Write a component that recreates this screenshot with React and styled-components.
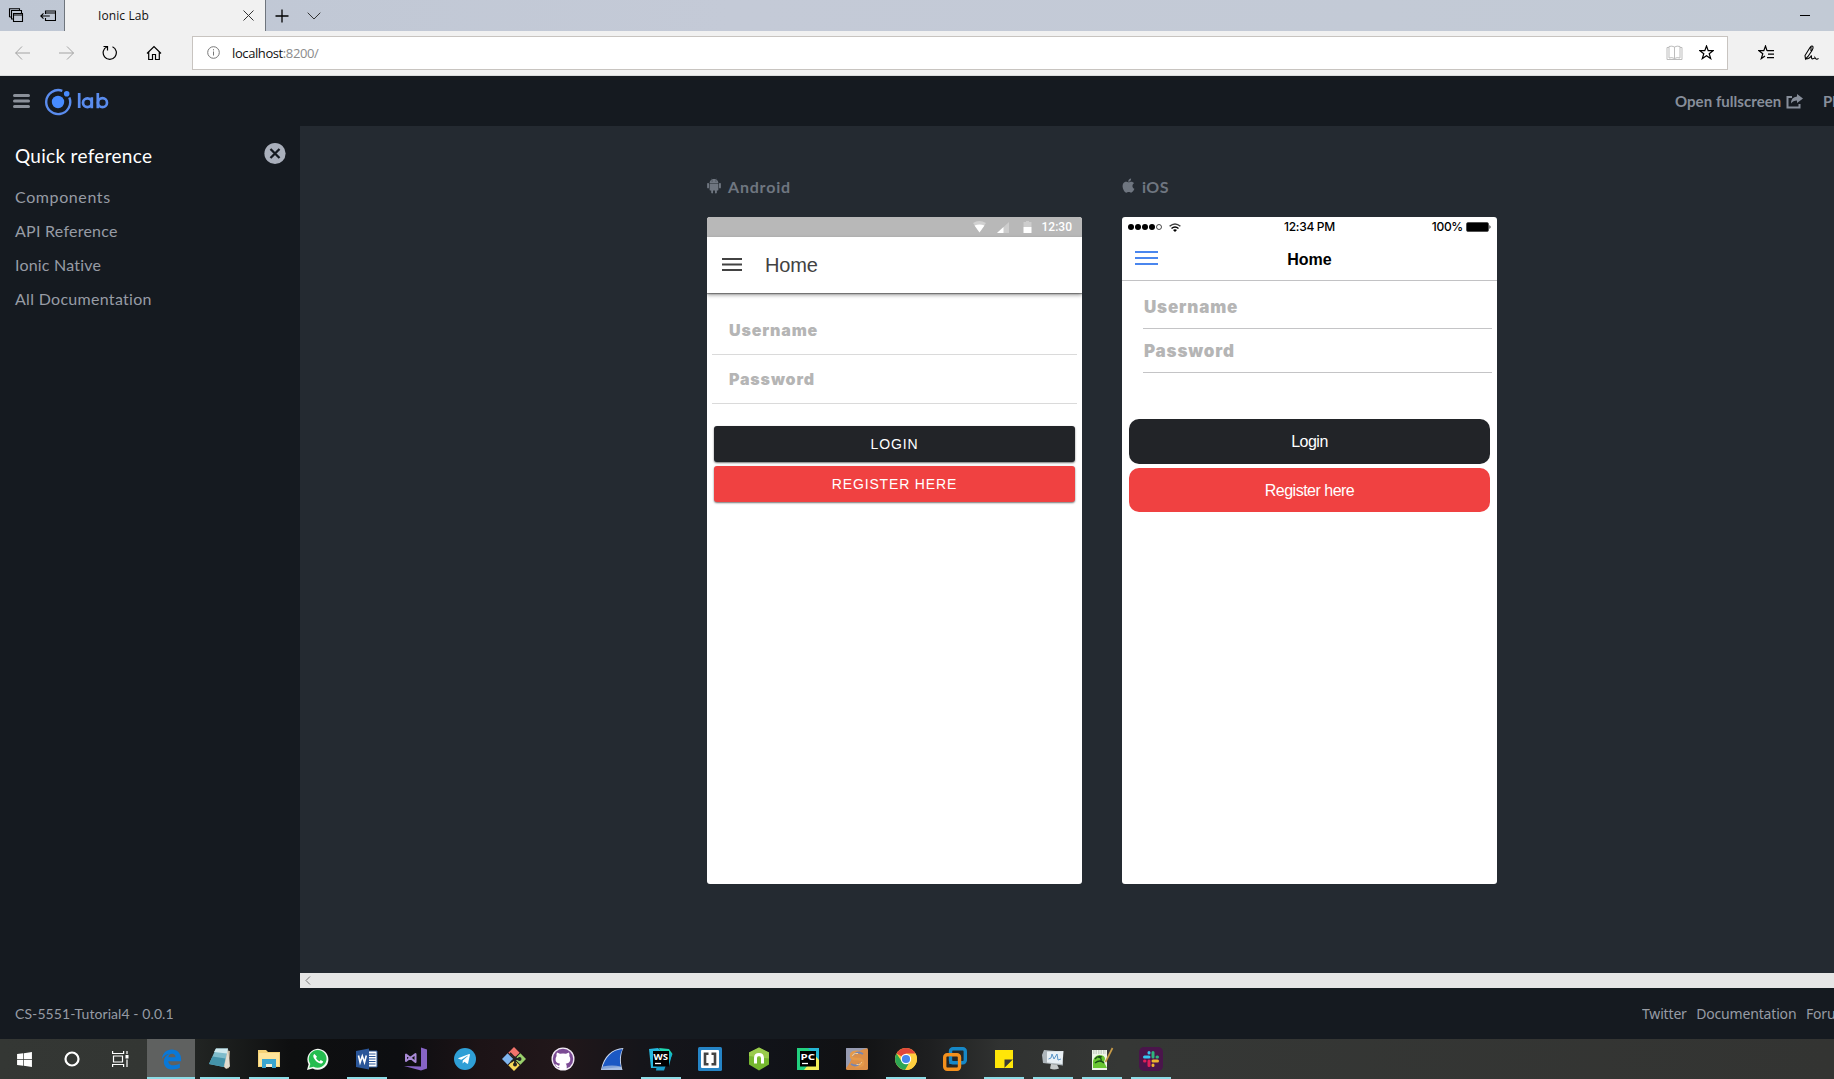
import React from 'react';
import styled, { createGlobalStyle } from 'styled-components';
import { FaWindows, FaTelegramPlane } from 'react-icons/fa';
import { IoLogoAndroid, IoLogoApple } from 'react-icons/io';

const Global = createGlobalStyle`
  * { box-sizing: border-box; }
  html, body { margin: 0; padding: 0; overflow: hidden; background: #151a20; }
  svg { display: block; flex: none; }
`;

const ui = `"Open Sans", "Noto Sans", sans-serif`;
const avenir = `Lato, "Open Sans", sans-serif`;
const arial = `"Liberation Sans", Arial, sans-serif`;

const Screen = styled.div`
  width: 1834px;
  height: 1079px;
  display: flex;
  flex-direction: column;
  overflow: hidden;
  white-space: nowrap;
`;

/* ---------- browser ---------- */
const TabStrip = styled.div`
  flex: 0 0 31px;
  display: flex;
  background: linear-gradient(90deg, #bfc7d4, #c4cad7 40%, #c3cad6 75%, #c2cad5);
`;
const TabTools = styled.div`
  width: 65px;
  display: flex;
  align-items: center;
  padding-left: 8px;
  gap: 16px;
  border-right: 1px solid #6f757d;
`;
const Tab = styled.div`
  width: 201px;
  display: flex;
  align-items: center;
  justify-content: space-between;
  padding: 0 11px 0 33px;
  background: #f1f1f1;
  border-right: 1px solid #6f757d;
  font: 12px/31px ${ui};
  letter-spacing: 0.1px;
  color: #111;
`;
const TabActions = styled.div`
  flex: 1;
  display: flex;
  align-items: center;
  gap: 18px;
  padding: 0 24px 0 9px;
`;
const Minimize = styled.i`
  margin-left: auto;
  width: 10px;
  height: 1px;
  background: #000;
`;
const NavBar = styled.div`
  flex: 0 0 45px;
  display: flex;
  align-items: center;
  padding: 0 14px 1px 15px;
  background: #f1f1f1;
  border-bottom: 1px solid #d9dcdc;
`;
const NavButtons = styled.div`
  width: 177px;
  display: flex;
  gap: 27.6px;
`;
const Address = styled.div`
  flex: 1;
  height: 34px;
  display: flex;
  align-items: center;
  padding: 0 13px 0 14px;
  background: #fff;
  border: 1px solid #c8c4c0;
  font: 13px/32px ${ui};
  letter-spacing: -0.4px;
  color: #111;
`;
const Url = styled.div`
  flex: 1;
  margin-left: 12px;
  span { color: #8b8b8b; }
`;
const AddressIcons = styled.div`
  display: flex;
  gap: 16px;
`;
const NavRight = styled.div`
  display: flex;
  gap: 28px;
  margin: 0 1px 0 30px;
`;

/* ---------- lab shell ---------- */
const Header = styled.header`
  flex: 0 0 50px;
  display: flex;
  align-items: center;
  padding-left: 13px;
  background: #151a20;
`;
const Logo = styled.div`
  display: flex;
  align-items: center;
  margin: 1px 0 0 14px;
  gap: 5px;
`;
const HeaderLinks = styled.nav`
  width: 159px;
  margin-left: auto;
  display: flex;
  overflow: hidden;
  align-items: center;
  font: 700 15px/50px ${avenir};
  color: #878e9a;
`;
const OpenLink = styled.span`
  display: flex;
  align-items: center;
  width: 148px;
  flex: none;
  gap: 5px;
  letter-spacing: 0.05px;
`;
const Body = styled.div`
  flex: 0 0 863px;
  display: flex;
`;
const Sidebar = styled.aside`
  width: 300px;
  padding: 16px 14px 0 15px;
  background: #151a20;
`;
const SideHead = styled.div`
  display: flex;
  justify-content: space-between;
  align-items: flex-start;
  height: 38px;
`;
const SideTitle = styled.h2`
  margin: 0;
  font: 400 19px/27px ${avenir};
  letter-spacing: 0.3px;
  color: #fff;
`;
const SideLink = styled.a`
  display: block;
  font: 400 16px/34px ${avenir};
  letter-spacing: ${p => p.$ls};
  color: #979ca5;
`;
const Main = styled.main`
  flex: 1;
  display: flex;
  flex-direction: column;
  background: #242a31;
`;
const Stage = styled.div`
  flex: 1;
  display: flex;
  gap: 40px;
  padding: 48px 0 0 407px;
`;
const ScrollTrack = styled.div`
  height: 16px;
  display: flex;
  align-items: center;
  padding-left: 5px;
  background: #e6e6e6;
  border-bottom: 1px solid #151a20;
`;
const DeviceLabel = styled.div`
  display: flex;
  align-items: center;
  height: 26px;
  gap: 4px;
  margin-bottom: 17px;
  font: 700 16px/26px ${avenir};
  letter-spacing: ${p => p.$ls};
  color: #6f7680;
  svg { margin-top: -3px; margin-left: ${p => p.$pull}; }
`;
const Phone = styled.div`
  width: 375px;
  height: 667px;
  overflow: hidden;
  border-radius: 3px;
  background: #fff;
`;

/* ---------- android ---------- */
const MdStatus = styled.div`
  height: 20px;
  display: flex;
  align-items: center;
  justify-content: flex-end;
  padding-right: 10px;
  background: #b8b8b8;
  font: 500 12px/21px Roboto, sans-serif;
  color: #fff;
`;
const MdToolbar = styled.div`
  height: 56px;
  display: flex;
  align-items: center;
  padding-left: 15px;
  gap: 23px;
  box-shadow: 0 2px 4px rgba(0, 0, 0, 0.4), 0 1px 1px rgba(0, 0, 0, 0.35);
  font: 20px/56px ${arial};
  letter-spacing: -0.2px;
  color: #424242;
`;
const MdForm = styled.div`
  padding: 13px 5px 0;
`;
const MdField = styled.div`
  height: 49px;
  padding-left: 17px;
  border-bottom: 1px solid #dadada;
  font: 900 16px/49px Inter, sans-serif;
  letter-spacing: 0.85px;
  color: #b5b5b5;
`;
const MdButtons = styled.div`
  padding: 22px 2px 0;
`;
const MdButton = styled.div`
  height: 36px;
  margin-bottom: 4px;
  border-radius: 3px;
  background: ${p => p.$bg};
  box-shadow: 0 1px 2px rgba(0, 0, 0, 0.55);
  text-align: center;
  font: 14px/37px ${arial};
  letter-spacing: 0.84px;
  color: #fff;
`;

/* ---------- ios ---------- */
const IosStatus = styled.div`
  height: 20px;
  display: grid;
  grid-template-columns: 1fr auto 1fr;
  align-items: center;
  padding: 0 6px;
  font: 500 12px/20px Inter, sans-serif;
  letter-spacing: -0.3px;
  color: #000;
`;
const StatusLeft = styled.span`
  display: flex;
  gap: 7px;
`;
const StatusRight = styled.span`
  display: flex;
  align-items: center;
  justify-content: flex-end;
  gap: 3px;
`;
const IosToolbar = styled.div`
  height: 44px;
  display: grid;
  grid-template-columns: 1fr auto 1fr;
  align-items: center;
  padding: 0 13px;
  border-bottom: 1px solid #c2c2c4;
  font: 700 16px/45px ${arial};
  color: #000;
  svg { margin-top: -3px; }
`;
const IosForm = styled.div`
  padding: 4px 5px 0 21px;
`;
const IosField = styled.div`
  height: 44px;
  padding-left: 1px;
  border-bottom: 1px solid #c4c4c6;
  font: 900 17px/45px Inter, sans-serif;
  letter-spacing: 0.85px;
  color: #b5b5b5;
`;
const IosButtons = styled.div`
  padding: 46px 7px 0;
`;
const IosButton = styled.div`
  height: ${p => p.$h}px;
  margin-bottom: 4px;
  border-radius: 10px;
  background: ${p => p.$bg};
  text-align: center;
  font: 16px/45px ${arial};
  letter-spacing: -0.5px;
  color: #fff;
`;

/* ---------- footer and taskbar ---------- */
const Footer = styled.footer`
  flex: 0 0 50px;
  display: flex;
  padding-left: 15px;
  background: #151a20;
  font: 400 14px/50px ${avenir};
  letter-spacing: 0.08px;
  color: #979ca5;
`;
const FooterLinks = styled.nav`
  display: flex;
  gap: 9.5px;
  width: 192px;
  margin-left: auto;
  overflow: hidden;
  font: 400 14px/50px "Noto Sans", sans-serif;
  letter-spacing: -0.17px;
`;
const Taskbar = styled.div`
  flex: 0 0 40px;
  display: flex;
  background: linear-gradient(90deg, #343734 0, #333633 145px, #222523 195px, #0e0f10 290px, #0d0e11 400px, #1c1316 480px, #21171a 560px, #15151a 640px, #111319 760px, #101113 850px, #1e1f20 930px, #303231 1000px, #353735 1120px, #333432 1834px);
`;
const SystemSlots = styled.div`
  width: 147px;
  display: flex;
`;
const Slot = styled.div`
  width: ${p => p.$w}px;
  display: flex;
  flex-direction: column;
  align-items: center;
  background: ${p => (p.$active ? '#5f6160' : 'transparent')};
`;
const SlotIcon = styled.div`
  height: 38px;
  display: flex;
  align-items: center;
  padding-top: 2px;
`;
const Running = styled.i`
  width: ${p => p.$w}px;
  height: 2px;
  background: #8ddce6;
`;
const Apps = styled.div`
  display: flex;
  margin-left: 0.5px;
`;

const Line = ({ w = 16, h = 16, vb, c = '#000', sw = 1, children, ...r }) => (
  <svg width={w} height={h} viewBox={vb || `0 0 ${w} ${h}`} fill="none" stroke={c} strokeWidth={sw} {...r}>{children}</svg>
);
const App24 = ({ children, s = 24 }) => (
  <svg width={s} height={s} viewBox="0 0 24 24" fill="none">{children}</svg>
);
const badge = { fontFamily: '"Open Sans", sans-serif', fontWeight: 700, fill: '#fff' };

const Edge = () => (
  <App24 s={23}><path fill="#0a78d7" d="M2 11.5C2.6 5.5 6.7 1.6 12.3 1.6c6 0 9.7 4.3 9.7 10v2.1H8.6c.2 3 2.800 4.300 5.800 4.300 2.400 0 4.500-.7 6.300-1.800v4.500c-2.200 1.200-4.600 1.800-7.300 1.800-5.900 0-9.400-3.200-9.400-8.200 0-3.700 2-6.700 5.600-8.400-3.400.4-5.900 2.500-7.600 5.600zM8.700 9.700h7.500c0-2.400-1.400-3.800-3.600-3.800-2.300 0-3.600 1.700-3.900 3.800z" /></App24>
);
const Notepad = () => (
  <App24>
    <path d="M8 2l14 2-1 17-3 1z" fill="#b9a98f" />
    <path d="M8 1.500h12L16 20 1 17z" fill="#7fbccb" />
    <path d="M8 1.500h12l-1 5-13-1.500z" fill="#cfe9ee" />
    <path d="M4.500 9.500l13 2-2 8.500L1 17z" fill="#4493aa" />
    <path d="M20 2l2 17.500-4 2-2-1.500z" fill="#e3dccf" />
  </App24>
);
const Explorer = () => (
  <App24>
    <path d="M1 3h8l2 2h12v15H1z" fill="#f5d277" />
    <path d="M2 6h20v13H2z" fill="#ffe59b" />
    <path d="M5 12h14v9h-4v-4H9v4H5z" fill="#3ba6cf" />
    <path d="M9 17h6v3H9z" fill="#f6efd4" />
  </App24>
);
const WhatsApp = () => (
  <App24>
    <path d="M1 23l1.600-5.700A10.500 10.500 0 1 1 6.700 21.500z" fill="#f4fbf4" />
    <path d="M3.200 20.800l1.100-3.900A8.900 8.900 0 1 1 7.400 19.700z" fill="#25bd4f" />
    <path d="M8.500 7c-1.500.8-1.500 2.600-.5 4.300 1.400 2.500 3.300 4.200 5.700 5 1.800.6 3.200-.3 3.500-1.900l-2.500-1.300-1.200 1.300c-1.600-.7-2.800-1.900-3.500-3.400l1-1.200z" fill="#fff" />
  </App24>
);
const Word = () => (
  <App24>
    <path d="M12 4h10v16H12z" fill="#fff" stroke="#2a5699" />
    <path d="M14 7h6.500M14 9.500h6.500M14 12h6.500M14 14.500h6.500M14 17h6.500" stroke="#2a5699" strokeWidth="1.200" />
    <path d="M1 4l13-2.500v21L1 20z" fill="#2a5699" />
    <path d="M3.500 8.500l1.600 7 2.200-6.500 2.200 6.500 1.800-7" stroke="#fff" strokeWidth="1.600" />
  </App24>
);
const VisualStudio = () => (
  <App24>
    <path d="M17 .5l6 2v19l-6 2L0 19l17 .5z" fill="#8764c5" />
    <path d="M2 7.500v6.500l9.500-7v8z" stroke="#a98ad6" strokeWidth="2" strokeLinejoin="round" />
  </App24>
);
const Telegram = () => (
  <App24>
    <circle cx="12" cy="12" r="11" fill="#2f9fd6" />
    <g transform="translate(4.300 5.200)"><FaTelegramPlane size={13.500} color="#fff" /></g>
  </App24>
);
const Git = () => (
  <App24>
    <g transform="rotate(45 12 12)">
      <rect x="3.500" y="3.500" width="8" height="8" fill="#f1736b" />
      <rect x="12.500" y="3.500" width="8" height="8" fill="#9ad06c" />
      <rect x="3.500" y="12.500" width="8" height="8" fill="#7fb5ee" />
      <rect x="12.500" y="12.500" width="8" height="8" fill="#f7d85a" />
    </g>
    <path d="M8 6l5 5v7M13 12h4M13 12l-4 3" stroke="#222" strokeWidth="1.800" />
    <circle cx="13" cy="11.500" r="2" fill="#222" /><circle cx="17.500" cy="12" r="2" fill="#222" /><circle cx="13" cy="17.500" r="2" fill="#222" />
  </App24>
);
const GitHub = () => (
  <App24>
    <circle cx="12" cy="12" r="11.500" fill="#f4eef7" />
    <circle cx="12" cy="12" r="10.200" fill="#7b4b94" />
    <path d="M6 5.500l3 1.300q3-.8 6 0l3-1.300q.8 2 .3 3.500 1.500 2 .9 4.500-.8 2.800-4.500 3.200 1 .8 1 2.500v3q-3.700 1-7.400 0v-2q-2.500.5-3.500-1.800l-1-1 2 .2q.9 1.400 2.500 1 .1-1.200.8-1.900-3.700-.4-4.500-3.200-.5-2.500 1-4.500-.5-1.500.4-3.500z" fill="#fff" />
  </App24>
);
const Wireshark = () => (
  <App24>
    <path d="M1 23C3.500 9 12 1.500 23.500 1c-3 6-3.500 14-1 22z" fill="#cfdcf3" />
    <path d="M2 22C5 10 12 3 22.500 2c-3 6-3.300 12-1.500 18z" fill="#1b58c4" />
    <path d="M3 19.500q9-2 18 0L22 23H1.500z" fill="#9db6dd" opacity=".8" />
  </App24>
);
const Jet = ({ text, kind }) => (
  <App24>
    {kind === 'ws' ? (
      <>
        <path d="M0 2l9-1 3 3-3 17H2z" fill="#25b8df" />
        <path d="M10 1l10 1 3.500 5-3 7-6-3z" fill="#1fd6b0" />
        <path d="M8 17l9 1-2 5.500H7z" fill="#189dcc" />
        <path d="M17 4l6 3-3 12z" fill="#16b0cf" />
      </>
    ) : (
      <>
        <path d="M1 1h22v22H1z" fill="#22d07f" />
        <path d="M23 4v19H8z" fill="#f2ee58" />
        <path d="M12 1h11v12z" fill="#25b7d6" />
      </>
    )}
    <path d="M4 4h16v15.500H4z" fill="#000" />
    <text x="4.500" y="13" style={badge} fontSize="9.500" textLength="14.500" lengthAdjust="spacingAndGlyphs">{text}</text>
    <path d="M6 16.500h6" stroke="#fff" strokeWidth="1.300" />
  </App24>
);
const Brackets = () => (
  <App24>
    <rect x="0" y="0" width="24" height="24" rx="1.500" fill="#2584c6" />
    <rect x="3" y="3" width="18" height="18" rx="1" fill="#fff" />
    <path d="M10.500 6.800H7v10.400h3.500M13.500 6.800H17v10.400h-3.500" stroke="#444" strokeWidth="2.600" />
  </App24>
);
const Nox = () => (
  <App24>
    <path d="M12 .5l10 5v12l-10 6-10-6v-12z" fill="#76b82f" />
    <path d="M12 .5l10 5v6L2 9V5.500z" fill="#9acb4c" />
    <path d="M8.500 16.500V11q0-3.500 3.500-3.500t3.500 3.500v5.500" stroke="#fff" strokeWidth="3" />
  </App24>
);
const Swirl = () => (
  <App24>
    <rect x="1" y="1" width="22" height="22" rx="1.500" fill="#dc8f48" />
    <path d="M1 1h22Q10 4 7 11T1 21z" fill="#8b9ec4" opacity=".85" />
    <path d="M14 5q-8-1-8 4 0 3 6 3t6 4q0 4-8 3" stroke="#e59a4a" strokeWidth="2.600" />
    <path d="M18 7q-5-3-8 0M6 17q5 3 8 0" stroke="#7486b5" strokeWidth="1.800" />
    <path d="M13 6.500q-5-.5-5.500 2.500M16.500 15q0 3-5 2.500" stroke="#f6cf98" strokeWidth="1" />
  </App24>
);
const Chrome = () => (
  <App24>
    <circle cx="12" cy="12" r="11" fill="#ffcf3f" />
    <path d="M12 12L2.500 6.500a11 11 0 0 1 19 0z" fill="#e1473a" />
    <path d="M2.500 6.500a11 11 0 0 0 8.500 16.400l5-8.500-8.500-.5z" fill="#2da654" />
    <path d="M12 6.500h9.500a11 11 0 0 1-10 16.400L17 13z" fill="#ffcf3f" />
    <circle cx="12" cy="12" r="5.200" fill="#fff" />
    <circle cx="12" cy="12" r="4.100" fill="#4787ee" />
  </App24>
);
const VMware = () => (
  <App24>
    <rect x="7.500" y="1.700" width="14.800" height="14" rx="2.500" stroke="#1688c8" strokeWidth="3.400" />
    <rect x="1.700" y="7.800" width="14.800" height="14.500" rx="2.500" stroke="#f3901d" strokeWidth="3.400" />
    <path d="M7.500 9.500v6.200h7" stroke="#1688c8" strokeWidth="2.400" />
  </App24>
);
const Sticky = () => (
  <App24><path d="M3 3h18v18H3z" fill="#ffe608" /><path d="M12.500 21v-8.500H21z" fill="#3a3a34" /><path d="M21 12.500V21h-8.500z" fill="#ffe608" /></App24>
);
const Monitor = () => (
  <App24>
    <path d="M3 3l17 1.500 2 14-20-2.500-1-8z" fill="#aeb6bb" />
    <path d="M6 4.500l16.500-.5-1 13-15.500-1.500z" fill="#e9f0f5" />
    <path d="M7.500 12l2.500-1 1-4 2 5 3-5 1 6 3-1" stroke="#5995c8" />
    <path d="M10 17l6 .5 2 4q-5 2-9 0z" fill="#c5c9c9" />
  </App24>
);
const NotepadPP = () => (
  <App24>
    <path d="M2 3h15v20H2z" fill="#eef5e8" />
    <path d="M3 4h13M3 6h13" stroke="#a9b1a5" strokeDasharray="1.500 1" />
    <path d="M3 14q1-5 6-6 6 0 6 4l-1 3 3 6H3z" fill="#69c632" />
    <path d="M5 12q3-4 7-2M5 16q5-4 9 0M8 10q4 0 3 5" stroke="#174d16" strokeWidth="1.300" />
    <path d="M22.500 1l-7 14" stroke="#c79b47" strokeWidth="1.700" />
  </App24>
);
const Slack = () => (
  <App24>
    <rect x="0" y="0" width="24" height="24" rx="5" fill="#4a154b" />
    <g strokeWidth="3" strokeLinecap="round">
      <path d="M10 5.500V6M5.500 10H10" stroke="#36c5f0" />
      <path d="M14 5.500V10M18.500 10h-.5" stroke="#2eb67d" />
      <path d="M14 14h4.500M14 18.500v-.5" stroke="#ecb22e" />
      <path d="M10 14v4.500M5.500 14h.5" stroke="#e01e5a" />
    </g>
  </App24>
);

const apps = [
  [Notepad, 1], [Explorer, 1], [WhatsApp, 0], [Word, 1], [VisualStudio, 0], [Telegram, 0], [Git, 0], [GitHub, 0],
  [Wireshark, 0], [() => <Jet text="WS" kind="ws" />, 1], [Brackets, 0], [Nox, 0], [() => <Jet text="PC" />, 0],
  [Swirl, 0], [Chrome, 1], [VMware, 0], [Sticky, 1], [Monitor, 1], [NotepadPP, 1], [Slack, 1],
];

const Star = 'M7.500 1l1.700 4.700h4.900l-3.900 3 1.500 4.900-4.200-2.900-4.200 2.900 1.500-4.900-3.900-3h4.900z';

export default function App() {
  return (
    <Screen>
      <Global />
      <TabStrip>
        <TabTools>
          <Line w={16} h={16}><path d="M1.500 9V.8h10V3M3.500 11.500v-9h10V5M5.500 5.500h9v8h-9zM5.500 7h9M1.500 9h2M3.500 11h2" strokeWidth="1.100" /></Line>
          <Line w={16} h={16}><path d="M5.500 6V3h10v9.500h-10V10M5.500 5h10M.8 8h9M3.500 5.300L.8 8l2.700 2.700" strokeWidth="1.100" /></Line>
        </TabTools>
        <Tab>Ionic Lab<Line w={11} h={11} c="#333"><path d="M.5.5l10 10M10.500.5l-10 10" /></Line></Tab>
        <TabActions>
          <Line w={14} h={14} sw={1.300}><path d="M7 .5v13M.5 7h13" /></Line>
          <Line w={14} h={8} c="#333"><path d="M.7.7L7 7 13.300.7" /></Line>
          <Minimize />
        </TabActions>
      </TabStrip>
      <NavBar>
        <NavButtons>
          <Line c="#a3a3a3"><path d="M.5 8H15M7 1.500L.7 8 7 14.500" /></Line>
          <Line c="#a3a3a3"><path d="M0 8h14.500M8 1.500L14.500 8 8 14.500" /></Line>
          <Line sw={1.200}><path d="M5 1.700a6.600 6.600 0 1 0 5.500 0M1.500 1.500h4v4" /></Line>
          <Line sw={1.200}><path d="M1 8.500L8 1.500l7 7M2.700 7v7.500H6.500V9.500h3v5h3.800V7" /></Line>
        </NavButtons>
        <Address>
          <Line w={13} h={13} c="#777"><circle cx="6.500" cy="6.500" r="5.800" /><path d="M6.500 5.500v4M6.500 3.200v1.200" /></Line>
          <Url>localhost<span>:8200/</span></Url>
          <AddressIcons>
            <Line w={17} h={16} c="#bdbdbd"><path d="M8.500 2v12M8.500 2Q6 .5 3 1.500V13q3-1 5.500.5Q11 12 14 13V1.500Q11 .5 8.500 2zM3 2.500H1v12h15v-12h-2" /></Line>
            <Line w={15} h={15} sw={1.200}><path d={Star} /></Line>
          </AddressIcons>
        </Address>
        <NavRight>
          <Line w={17} h={15} sw={1.200}><path d="M9 5.700L7.500 1 5.800 5.700H1l3.800 3-1.500 4.900L7 11M9 5.700h7M10 9.200h6M9 12.700h7" /></Line>
          <Line w={16} h={16} sw={1.100}><path d="M2.500 14L2 10.500 7 2.500q2-2.500 3-.8.5 1.300-1 3.800L5 11.500zM8 2v4M2.500 14q4.500-.3 6-3.500-.5 4 1.500 3.300t2-1q1.500 2.500 3.500.5" /></Line>
        </NavRight>
      </NavBar>

      <Header>
        <Line w={17} h={16} c="#8a9099" sw={3}><path d="M1.500 2.500h14M1.500 8h14M1.500 13.500h14" strokeLinecap="round" /></Line>
        <Logo>
          <svg width="28" height="28" viewBox="0 0 28 28" fill="none">
            <path d="M18.300 2.800A12 12 0 1 0 25.300 9.500" stroke="#5a8cee" strokeWidth="2.400" />
            <circle cx="14" cy="14" r="6.200" fill="#478bff" />
            <circle cx="22.700" cy="5.700" r="2.800" fill="#478bff" />
          </svg>
          <svg width="34" height="20" viewBox="0 0 34 20" fill="none" stroke="#5a8cee" strokeWidth="2.700">
            <path d="M2.200 1v15M14.800 5.300v10.900M20.800 1v15.200" />
            <circle cx="10.400" cy="10.700" r="4.400" />
            <circle cx="25.500" cy="10.700" r="4.500" />
          </svg>
        </Logo>
        <HeaderLinks>
          <OpenLink>
            Open fullscreen
            <Line w={18} h={15} c="#878e9a" sw={2}><path d="M6 3H1.500v10.500h12V10" /><path d="M11 0l6 4.500-6 4.500V6.500q-4 0-6 3 0-6.500 6-7z" fill="#878e9a" stroke="none" /></Line>
          </OpenLink>
          <span>Pl</span>
        </HeaderLinks>
      </Header>

      <Body>
        <Sidebar>
          <SideHead>
            <SideTitle>Quick reference</SideTitle>
            <Line w={22} h={23} c="#151a20" sw={2.300}><circle cx="11" cy="11.500" r="10.600" fill="#a9afbb" stroke="none" /><path d="M6.500 7l9 9M15.500 7l-9 9" /></Line>
          </SideHead>
          <SideLink $ls="0.6px">Components</SideLink>
          <SideLink $ls="0.25px">API Reference</SideLink>
          <SideLink $ls="0.2px">Ionic Native</SideLink>
          <SideLink $ls="0.3px">All Documentation</SideLink>
        </Sidebar>
        <Main>
          <Stage>
            <div>
              <DeviceLabel $ls="0.8px" $pull="-3px"><IoLogoAndroid size={20} />Android</DeviceLabel>
              <Phone>
                <MdStatus>
                  <svg width="93" height="16" viewBox="0 0 93 16" fill="#fff">
                    <path opacity=".35" d="M24 4q6-4 13 0l-6.500 9z" /><path d="M25.500 6.500q5-2 10 0l-5 7z" />
                    <path opacity=".3" d="M60 3v11H48z" /><path d="M54.500 8v6H48z" />
                    <path opacity=".3" d="M74.500 3H77V2h3v1h2.500v5h-8z" /><path d="M74.500 8h8v6h-8z" />
                  </svg>
                  12:30
                </MdStatus>
                <MdToolbar>
                  <Line w={20} h={14} c="#424242" sw={2}><path d="M0 1h20M0 6.500h20M0 12h20" /></Line>
                  Home
                </MdToolbar>
                <MdForm>
                  <MdField>Username</MdField>
                  <MdField>Password</MdField>
                  <MdButtons>
                    <MdButton $bg="#222428">LOGIN</MdButton>
                    <MdButton $bg="#f04141">REGISTER HERE</MdButton>
                  </MdButtons>
                </MdForm>
              </Phone>
            </div>
            <div>
              <DeviceLabel $ls="0.4px" $pull="-3px"><IoLogoApple size={19} />iOS</DeviceLabel>
              <Phone>
                <IosStatus>
                  <StatusLeft>
                    <svg width="34" height="8" viewBox="0 0 34 8">
                      <circle cx="3" cy="4" r="3" /><circle cx="10" cy="4" r="3" /><circle cx="17" cy="4" r="3" /><circle cx="24" cy="4" r="3" />
                      <circle cx="31" cy="4" r="2.500" fill="none" stroke="#000" strokeWidth=".7" />
                    </svg>
                    <Line w={12} h={9} sw={1.500}><path d="M.6 3.300q5.400-4.600 10.800 0" opacity=".75" /><path d="M2.500 5.500q3.500-2.900 7 0" /><path d="M4 7q2-1.500 4 0L6 9z" fill="#000" stroke="none" /></Line>
                  </StatusLeft>
                  12:34 PM
                  <StatusRight>
                    100%
                    <svg width="25" height="10" viewBox="0 0 25 10"><rect x=".5" y=".5" width="22" height="9" rx="1.500" fill="#000" stroke="#333" strokeWidth=".6" /><path d="M23.500 3v4q2-2 0-4z" /></svg>
                  </StatusRight>
                </IosStatus>
                <IosToolbar>
                  <Line w={23} h={16} c="#4a86ee" sw={2}><path d="M0 2h23M0 8h23M0 14h23" /></Line>
                  Home
                </IosToolbar>
                <IosForm>
                  <IosField>Username</IosField>
                  <IosField>Password</IosField>
                </IosForm>
                <IosButtons>
                  <IosButton $h={45} $bg="#222428">Login</IosButton>
                  <IosButton $h={44} $bg="#f04141">Register here</IosButton>
                </IosButtons>
              </Phone>
            </div>
          </Stage>
          <ScrollTrack><Line w={6} h={9} c="#777"><path d="M5 .5l-4 4 4 4" /></Line></ScrollTrack>
        </Main>
      </Body>

      <Footer>
        CS-5551-Tutorial4 - 0.0.1
        <FooterLinks><span>Twitter</span><span>Documentation</span><span>Foru</span></FooterLinks>
      </Footer>

      <Taskbar>
        <SystemSlots>
          <Slot $w={48}><SlotIcon><FaWindows size={17} color="#fff" /></SlotIcon></Slot>
          <Slot $w={48}><SlotIcon><Line w={16} h={16} c="#fff" sw={2.200}><circle cx="8" cy="8" r="6.500" /></Line></SlotIcon></Slot>
          <Slot $w={48}><SlotIcon><Line w={17} h={16} c="#fff" sw={1.200}><path d="M.6 0v2.500h11V0M1.500 5h9v6h-9zM.6 16v-2.500h11V16M15 0v3M15 8.500V16" /><path d="M13.500 4h3v3.500h-3z" fill="#fff" stroke="none" /></Line></SlotIcon></Slot>
        </SystemSlots>
        <Slot $w={48} $active><SlotIcon><Edge /></SlotIcon><Running $w={48} /></Slot>
        <Apps>
          {apps.map(([Icon, on], i) => (
            <Slot key={i} $w={49}><SlotIcon><Icon /></SlotIcon>{on ? <Running $w={40} /> : null}</Slot>
          ))}
        </Apps>
      </Taskbar>
    </Screen>
  );
}
